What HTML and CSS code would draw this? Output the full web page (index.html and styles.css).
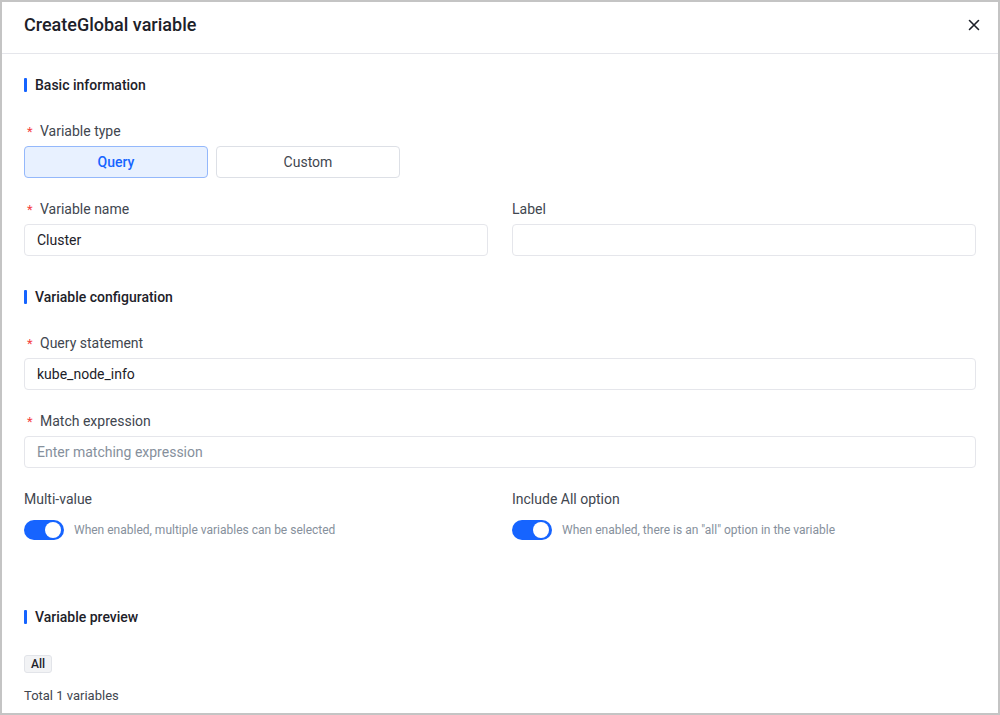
FILE: index.html
```html
<!DOCTYPE html>
<html>
<head>
<meta charset="utf-8">
<link rel="stylesheet" href="styles.css">
</head>
<body>
<div class="frame">
  <div class="header">
    <div class="title">CreateGlobal variable</div>
    <button class="close" aria-label="close">
      <svg width="12" height="12" viewBox="0 0 12 12"><path d="M1.5 1.5L10.5 10.5M10.5 1.5L1.5 10.5" stroke="#1d2129" stroke-width="1.6" stroke-linecap="round"/></svg>
    </button>
  </div>
  <div class="body">
    <div class="section-title">Basic information</div>
    <div class="field">
      <div class="label"><span class="req">*</span>Variable type</div>
      <div class="seg">
        <div class="seg-btn active">Query</div>
        <div class="seg-btn">Custom</div>
      </div>
    </div>
    <div class="row">
      <div class="field">
        <div class="label"><span class="req">*</span>Variable name</div>
        <div class="input">Cluster</div>
      </div>
      <div class="field">
        <div class="label">Label</div>
        <div class="input"></div>
      </div>
    </div>

    <div class="section-title sec2">Variable configuration</div>
    <div class="field">
      <div class="label"><span class="req">*</span>Query statement</div>
      <div class="input">kube_node_info</div>
    </div>
    <div class="field">
      <div class="label"><span class="req">*</span>Match expression</div>
      <div class="input placeholder">Enter matching expression</div>
    </div>
    <div class="row">
      <div class="field">
        <div class="label">Multi-value</div>
        <div class="switch-row">
          <span class="switch"><span class="knob"></span></span>
          <span class="hint">When enabled, multiple variables can be selected</span>
        </div>
      </div>
      <div class="field">
        <div class="label">Include All option</div>
        <div class="switch-row">
          <span class="switch"><span class="knob"></span></span>
          <span class="hint">When enabled, there is an "all" option in the variable</span>
        </div>
      </div>
    </div>

    <div class="section-title sec3">Variable preview</div>
    <div class="tags"><span class="tag">All</span></div>
    <div class="total">Total 1 variables</div>
  </div>
</div>
</body>
</html>
```
FILE: styles.css
```css
* { box-sizing: border-box; }
html, body { margin: 0; padding: 0; background: #fff; }
body { font-family: Roboto, "Noto Sans", sans-serif; color: #1d2129; }
.frame {
  width: 1000px;
  height: 715px;
  border: 2px solid #c4c4c4;
  background: #fff;
  overflow: hidden;
}
.header {
  height: 52px;
  display: flex;
  align-items: center;
  justify-content: space-between;
  padding: 0 14px 6px 22px;
  border-bottom: 1px solid #e5e6eb;
}
.title { font-size: 18px; font-weight: 500; color: #1d2129; line-height: 24px; }
.close {
  border: 0; background: none; padding: 0; width: 20px; height: 20px;
  display: flex; align-items: center; justify-content: center; cursor: pointer;
}
.body { padding: 21px 22px 0 22px; }
.section-title {
  font-size: 14px; font-weight: 500; line-height: 20px; color: #1d2129;
  height: 20px; position: relative; padding-left: 11px;
}
.section-title::before {
  content: ""; position: absolute; left: 0; top: 3px; width: 3px; height: 14px;
  background: #1664ff; border-radius: 1px;
}
.field { margin-top: 25px; }
.field + .field, .field + .row, .row + .field { margin-top: 20px; }
.row > .field { margin-top: 0; }
.row { display: grid; grid-template-columns: 1fr 1fr; gap: 24px; margin-top: 20px; }
.label { font-size: 14px; line-height: 22px; height: 22px; color: #41464f; margin-bottom: 4px; display: flex; align-items: center; }
.req { color: #f53f3f; width: 16px; padding-left: 3px; font-size: 13px; line-height: 22px; position: relative; top: 1px; }
.seg { display: flex; gap: 8px; }
.seg-btn {
  width: 184px; height: 32px; border: 1px solid #dde0e6; border-radius: 4px;
  display: flex; align-items: center; justify-content: center;
  font-size: 14px; color: #41464f; background: #fff;
}
.seg-btn.active { background: #e8f1ff; border-color: #94b8fb; color: #1664ff; font-weight: 500; }
.input {
  height: 32px; border: 1px solid #e5e6eb; border-radius: 4px;
  padding: 0 12px; display: flex; align-items: center;
  font-size: 14px; color: #1d2129;
}
.input.placeholder { color: #86909c; }
.sec2 { margin-top: 31px; }
.switch-row { height: 32px; display: flex; align-items: center; gap: 10px; }
.switch {
  width: 40px; height: 20px; border-radius: 10px; background: #1664ff;
  position: relative; flex: none;
}
.knob {
  position: absolute; right: 3px; top: 2px; width: 16px; height: 16px;
  border-radius: 50%; background: #fff;
}
.hint { font-size: 12px; color: #86909c; }
.sec3 { margin-top: 61px; }
.tags { margin-top: 28px; display: flex; }
.tag {
  height: 18px; width: 28px; justify-content: center; border: 1px solid #e2e4e9; border-radius: 3px;
  background: #f2f3f5; font-size: 12px; font-weight: 500; color: #1d2129;
  display: flex; align-items: center;
}
.total { margin-top: 13px; font-size: 13px; line-height: 20px; color: #41464f; }
```
